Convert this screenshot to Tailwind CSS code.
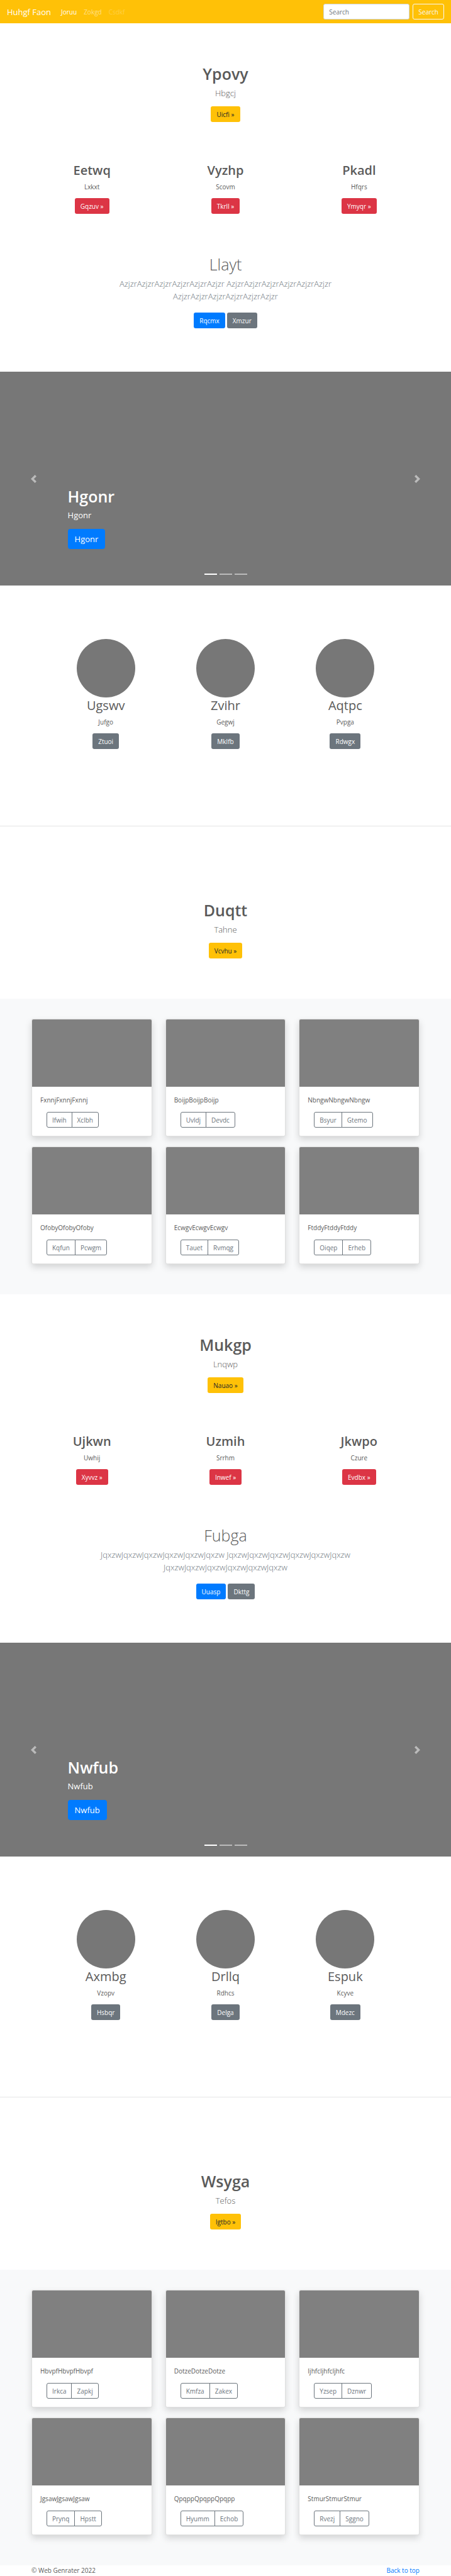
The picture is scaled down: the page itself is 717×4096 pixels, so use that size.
<!DOCTYPE html>
<html lang="en">
<head>
<meta charset="utf-8">
<meta name="viewport" content="width=device-width, initial-scale=1">
<title>Huhgf Faon</title>
<script src="https://cdn.jsdelivr.net/npm/@tailwindcss/browser@4"></script>
</head>
<body class="bg-white font-['Open_Sans','Noto_Sans',sans-serif] text-[10px] leading-4 text-[#5a5a5a]">
<header id="top" class="flex items-center bg-[#ffc107] px-[11px] py-1.5 text-white">
  <a href="#top" class="mr-4 text-[13px] leading-5">Huhgf Faon</a>
  <nav class="flex gap-[11px]">
    <a href="#top">Joruu</a>
    <a href="#top" class="text-white/50">Zokgd</a>
    <a href="#top" class="text-white/25">Csdkf</a>
  </nav>
  <form class="ml-auto flex gap-[5px]">
    <input type="search" aria-label="Search" placeholder="Search" class="h-[25px] w-[137px] rounded-[3px] border border-[#ced4da] bg-white px-2 text-[#495057] placeholder:text-[#6c757d]">
    <button type="button" class="h-[25px] rounded-[3px] border border-[#f8f9fa] px-2 text-[#f8f9fa]">Search</button>
  </form>
</header>
<main id="main"></main>
<footer class="flex justify-between px-[50px] leading-[17px]">
  <span>© Web Genrater 2022</span>
  <a href="#top" class="text-[#007bff]">Back to top</a>
</footer>
<script>
const button = (label, colour) =>
  `<button type="button" class="h-[25px] rounded-[3px] px-[9px] ${colour}">${label}</button>`;
const yellow = 'bg-[#ffc107] text-[#212529]';
const red = 'bg-[#dc3545] text-white';
const blue = 'bg-[#007bff] text-white';
const grey = 'bg-[#6c757d] text-white';

const intro = ([title, sub, label], pad) => `
  <section class="flex flex-col items-center ${pad}">
    <h1 class="text-[25px] leading-8 font-semibold">${title}</h1>
    <p class="mt-[5px] mb-[11px] text-[13px] leading-5 font-light">${sub}</p>
    ${button(label, yellow)}
  </section>`;

const feature = ([title, sub, label]) => `
  <div class="flex flex-col items-center">
    <h2 class="text-[20px] leading-[26px] font-semibold">${title}</h2>
    <p class="mt-[5px] mb-2.5">${sub}</p>
    ${button(label, red)}
  </div>`;

const person = ([title, sub, label]) => `
  <div class="flex flex-col items-center">
    <div class="size-[93px] rounded-full bg-[#777]"></div>
    <h2 class="text-[20px] leading-[26px]">${title}</h2>
    <p class="mt-[5px] mb-2.5">${sub}</p>
    ${button(label, grey)}
  </div>`;

const card = ([text, left, right]) => `
  <article class="overflow-hidden rounded-[3px] border border-black/12 bg-white shadow-[0_5px_11px_rgb(0_0_0/0.15)]">
    <div class="h-[107px] bg-[#808080]"></div>
    <div class="p-[13px]">
      <p class="mb-[11px]">${text}</p>
      <div class="ml-2.5 flex text-[#6c757d]">
        <button type="button" class="h-[25px] rounded-l-[3px] border border-[#6c757d] px-2">${left}</button>
        <button type="button" class="-ml-px h-[25px] rounded-r-[3px] border border-[#6c757d] px-2">${right}</button>
      </div>
    </div>
  </article>`;

const carousel = (name) => `
  <section class="relative flex h-[340px] flex-col items-start justify-end bg-[#777] pb-[58px] pl-[15%] text-white">
    <h2 class="text-[25px] leading-8 font-semibold">${name}</h2>
    <p class="mt-1 mb-3 text-[13px] leading-5">${name}</p>
    <button type="button" class="h-8 rounded-[4px] bg-[#007bff] px-[11px] text-[13px]">${name}</button>
    <button type="button" aria-label="Previous" class="absolute inset-y-0 left-0 flex w-[15%] items-center justify-center opacity-50">
      <svg class="size-[13px]" viewBox="0 0 8 8" fill="#fff"><path d="M5.25 0l-4 4 4 4 1.5-1.5L4.25 4l2.5-2.5L5.25 0z"/></svg>
    </button>
    <button type="button" aria-label="Next" class="absolute inset-y-0 right-0 flex w-[15%] items-center justify-center opacity-50">
      <svg class="size-[13px]" viewBox="0 0 8 8" fill="#fff"><path d="M2.75 0l-1.5 1.5L3.75 4l-2.5 2.5L2.75 8l4-4-4-4z"/></svg>
    </button>
    <div class="absolute inset-x-0 bottom-[17px] flex justify-center gap-1">
      <span class="h-0.5 w-5 bg-white"></span>
      <span class="h-0.5 w-5 bg-white/50"></span>
      <span class="h-0.5 w-5 bg-white/50"></span>
    </div>
  </section>`;

const block = (d) => `
  ${intro(d.intro, 'pt-16')}
  <section class="grid grid-cols-3 px-10 pt-16">${d.features.map(feature).join('')}</section>
  <section class="flex flex-col items-center px-[150px] pt-16 pb-[69px] text-center">
    <h2 class="text-[25px] leading-8 font-light">${d.jumbo[0]}</h2>
    <p class="mt-[5px] mb-4 text-[13px] leading-5 font-light text-[#6c757d]">${d.jumbo[1].repeat(6)} ${d.jumbo[1].repeat(6)}<br>${d.jumbo[1].repeat(6)}</p>
    <div class="flex gap-[3px]">${button(d.jumbo[2], blue)}${button(d.jumbo[3], grey)}</div>
  </section>
  ${carousel(d.slide)}
  <section class="grid grid-cols-3 px-[73px] pt-[85px] pb-[122px]">${d.people.map(person).join('')}</section>
  <hr class="border-black/10">
  ${intro(d.outro, 'pt-[117px] pb-16')}
  <section class="bg-[#f8f9fa] px-[50px] pt-8 pb-12">
    <div class="grid grid-cols-3 gap-x-[21px] gap-y-4">${d.cards.map(card).join('')}</div>
  </section>`;

const blocks = [
  {
    intro: ['Ypovy', 'Hbgcj', 'Uicfi »'],
    features: [['Eetwq', 'Lxkxt', 'Gqzuv »'], ['Vyzhp', 'Scovm', 'Tkrll »'], ['Pkadl', 'Hfqrs', 'Ymyqr »']],
    jumbo: ['Llayt', 'Azjzr', 'Rqcmx', 'Xmzur'],
    slide: 'Hgonr',
    people: [['Ugswv', 'Jufgo', 'Ztuoi'], ['Zvihr', 'Gegwj', 'Mklfb'], ['Aqtpc', 'Pvpga', 'Rdwgx']],
    outro: ['Duqtt', 'Tahne', 'Vcvhu »'],
    cards: [
      ['FxnnjFxnnjFxnnj', 'Ifwih', 'Xclbh'], ['BoijpBoijpBoijp', 'Uvldj', 'Devdc'], ['NbngwNbngwNbngw', 'Bsyur', 'Gtemo'],
      ['OfobyOfobyOfoby', 'Kqfun', 'Pcwgm'], ['EcwgvEcwgvEcwgv', 'Tauet', 'Rvmqg'], ['FtddyFtddyFtddy', 'Oiqep', 'Erheb'],
    ],
  },
  {
    intro: ['Mukgp', 'Lnqwp', 'Nauao »'],
    features: [['Ujkwn', 'Uwhij', 'Xyvvz »'], ['Uzmih', 'Srrhm', 'Inwef »'], ['Jkwpo', 'Czure', 'Evdbx »']],
    jumbo: ['Fubga', 'Jqxzw', 'Uuasp', 'Dkttg'],
    slide: 'Nwfub',
    people: [['Axmbg', 'Vzopv', 'Hsbqr'], ['Drllq', 'Rdhcs', 'Delga'], ['Espuk', 'Kcyve', 'Mdezc']],
    outro: ['Wsyga', 'Tefos', 'Igtbo »'],
    cards: [
      ['HbvpfHbvpfHbvpf', 'Irkca', 'Zapkj'], ['DotzeDotzeDotze', 'Kmfza', 'Zakex'], ['IjhfcIjhfcIjhfc', 'Yzsep', 'Dznwr'],
      ['JgsawJgsawJgsaw', 'Prynq', 'Hpstt'], ['QpqppQpqppQpqpp', 'Hyumm', 'Echob'], ['StmurStmurStmur', 'Rvezj', 'Sggno'],
    ],
  },
];
document.getElementById('main').innerHTML = blocks.map(block).join('');
</script>
</body>
</html>
